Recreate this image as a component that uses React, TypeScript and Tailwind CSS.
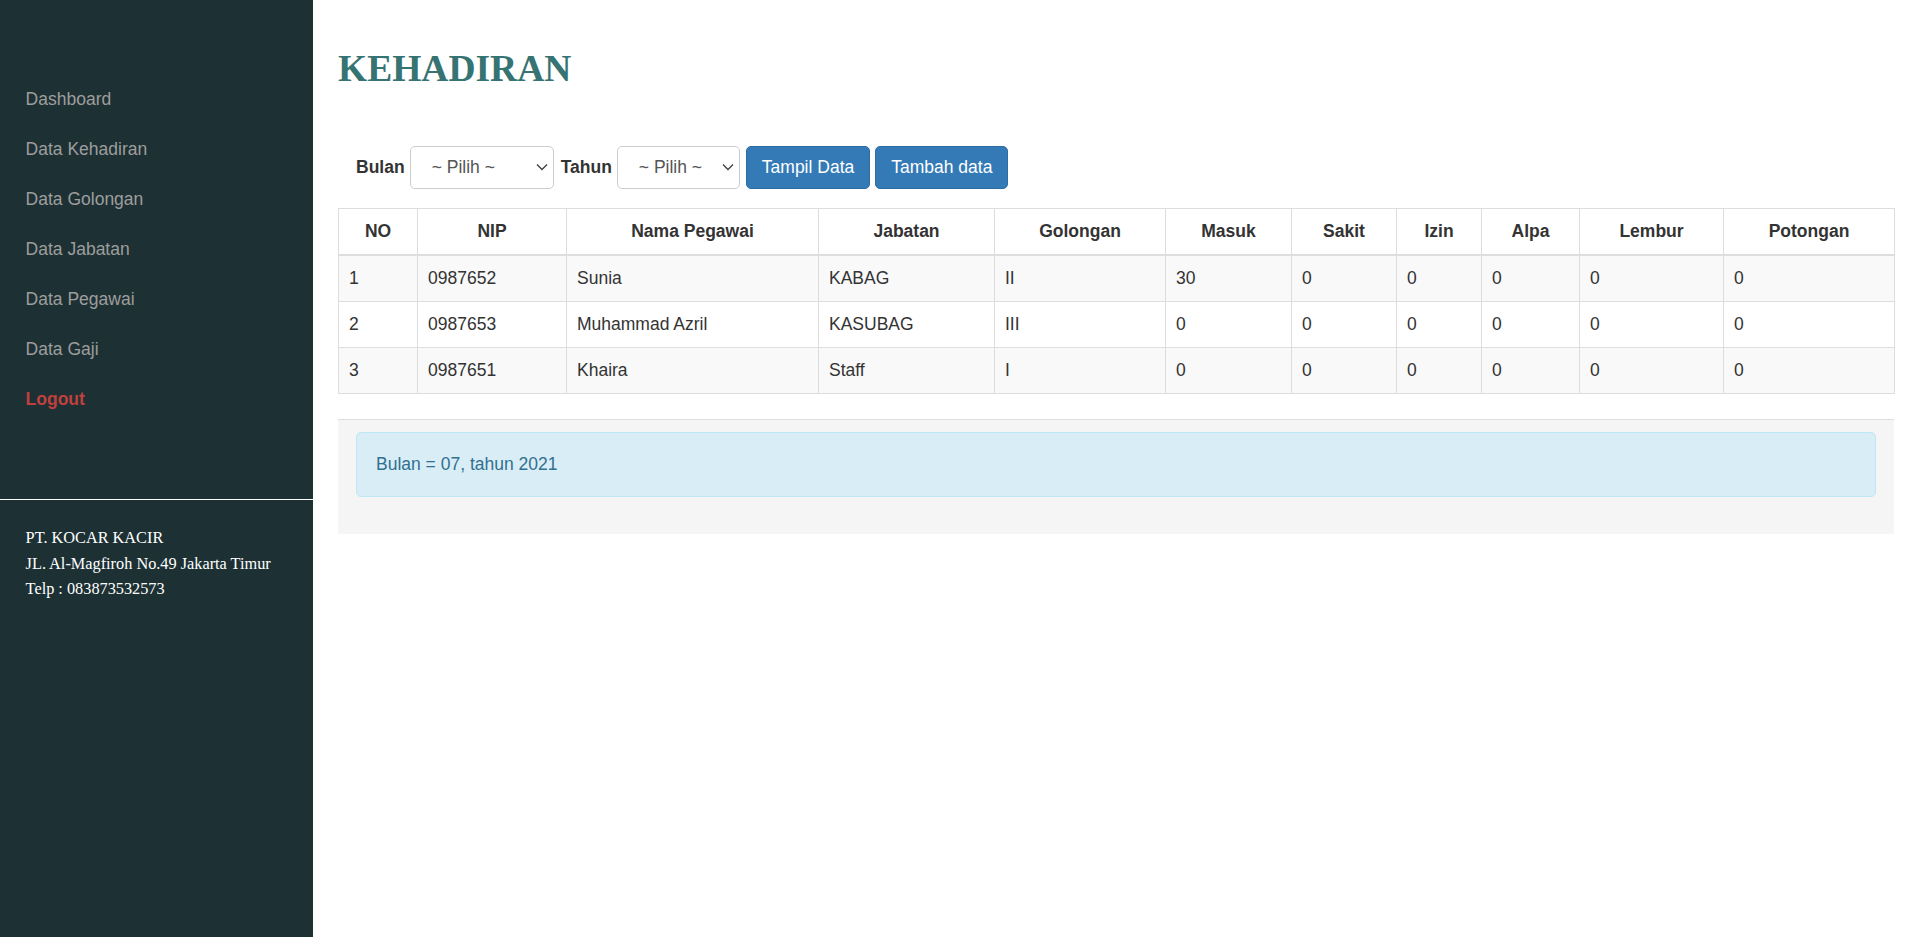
import React from "react";

type Row = {
  no: number;
  nip: string;
  nama: string;
  jabatan: string;
  golongan: string;
  masuk: number;
  sakit: number;
  izin: number;
  alpa: number;
  lembur: number;
  potongan: number;
};

const rows: Row[] = [
  { no: 1, nip: "0987652", nama: "Sunia", jabatan: "KABAG", golongan: "II", masuk: 30, sakit: 0, izin: 0, alpa: 0, lembur: 0, potongan: 0 },
  { no: 2, nip: "0987653", nama: "Muhammad Azril", jabatan: "KASUBAG", golongan: "III", masuk: 0, sakit: 0, izin: 0, alpa: 0, lembur: 0, potongan: 0 },
  { no: 3, nip: "0987651", nama: "Khaira", jabatan: "Staff", golongan: "I", masuk: 0, sakit: 0, izin: 0, alpa: 0, lembur: 0, potongan: 0 },
];

const columns = [
  { label: "NO", width: 79 },
  { label: "NIP", width: 149 },
  { label: "Nama Pegawai", width: 252 },
  { label: "Jabatan", width: 176 },
  { label: "Golongan", width: 171 },
  { label: "Masuk", width: 126 },
  { label: "Sakit", width: 105 },
  { label: "Izin", width: 85 },
  { label: "Alpa", width: 98 },
  { label: "Lembur", width: 144 },
  { label: "Potongan", width: 171 },
];

const menu = ["Dashboard", "Data Kehadiran", "Data Golongan", "Data Jabatan", "Data Pegawai", "Data Gaji"];

function Chevron() {
  return (
    <svg width="12" height="8" viewBox="0 0 12 8" fill="none" className="pointer-events-none absolute right-[6px] top-1/2 -translate-y-1/2">
      <path d="M1 1.5 6 6.5 11 1.5" stroke="#444" strokeWidth="1.4" />
    </svg>
  );
}

function PilihSelect({ width }: { width: string }) {
  return (
    <div className={`relative ${width}`}>
      <select className="h-[42.5px] w-full appearance-none rounded-[5px] border border-[#ccc] bg-white pl-[21px] pr-[24px] text-[17.5px] text-[#555] outline-none">
        <option>~ Pilih ~</option>
      </select>
      <Chevron />
    </div>
  );
}

export default function App() {
  return (
    <div className="flex min-h-[937px] w-full bg-white font-['Liberation_Sans',Arial,sans-serif] text-[17.5px] leading-[25px] text-[#333]">
      <aside className="w-[313px] shrink-0 bg-[#1d3134]">
        <nav className="pt-[74px]">
          {menu.map((m) => (
            <div key={m} className="px-[25.6px] py-[12.5px] text-[#9d9d9d]">
              {m}
            </div>
          ))}
          <div className="px-[25.6px] py-[12.5px] font-bold text-[#c0403f]">Logout</div>
        </nav>
        <div className="mt-[75px] h-px w-full bg-white" />
        <div className="px-[25.6px] pt-[25px] font-['Liberation_Serif','Times_New_Roman',serif] text-[16.3px] leading-[25.6px] text-white">
          <div>PT. KOCAR KACIR</div>
          <div>JL. Al-Magfiroh No.49 Jakarta Timur</div>
          <div>Telp : 083873532573</div>
        </div>
      </aside>

      <main className="min-w-0 flex-1 pl-[25px] pr-[21px] pt-[48px]">
        <h2 className="font-['Liberation_Serif','Times_New_Roman',serif] text-[37.5px] font-bold leading-[41px] text-[#367373]">
          KEHADIRAN
        </h2>

        <div className="mt-[57px] flex items-center px-[18px]">
          <span className="mr-[5px] font-bold">Bulan</span>
          <PilihSelect width="w-[144px]" />
          <span className="ml-[7px] mr-[5px] font-bold">Tahun</span>
          <PilihSelect width="w-[123px]" />
          <button className="ml-[6px] h-[42.5px] rounded-[5px] border border-[#2e6da4] bg-[#337ab7] px-[15px] text-white">
            Tampil Data
          </button>
          <button className="ml-[5px] h-[42.5px] rounded-[5px] border border-[#2e6da4] bg-[#337ab7] px-[15px] text-white">
            Tambah data
          </button>
        </div>

        <table className="mt-[19px] w-full table-fixed border-collapse border border-[#ddd]">
          <colgroup>
            {columns.map((c) => (
              <col key={c.label} style={{ width: c.width }} />
            ))}
          </colgroup>
          <thead>
            <tr>
              {columns.map((c) => (
                <th key={c.label} className="border border-b-2 border-[#ddd] px-[10px] py-[10px] text-center font-bold">
                  {c.label}
                </th>
              ))}
            </tr>
          </thead>
          <tbody>
            {rows.map((r, i) => (
              <tr key={r.no} className={i % 2 === 0 ? "bg-[#f9f9f9]" : "bg-white"}>
                {[r.no, r.nip, r.nama, r.jabatan, r.golongan, r.masuk, r.sakit, r.izin, r.alpa, r.lembur, r.potongan].map((v, j) => (
                  <td key={j} className="border border-[#ddd] px-[10px] py-[10px]">
                    {v}
                  </td>
                ))}
              </tr>
            ))}
          </tbody>
        </table>

        <div className="mt-[25px] border-t border-[#ddd] bg-[#f5f5f5] px-[18px] pb-[12.5px] pt-[12px]">
          <div className="mb-[25px] rounded-[5px] border border-[#bce8f1] bg-[#d9edf7] px-[19px] py-[19px] text-[#31708f]">
            Bulan = 07, tahun 2021
          </div>
        </div>
      </main>
    </div>
  );
}
